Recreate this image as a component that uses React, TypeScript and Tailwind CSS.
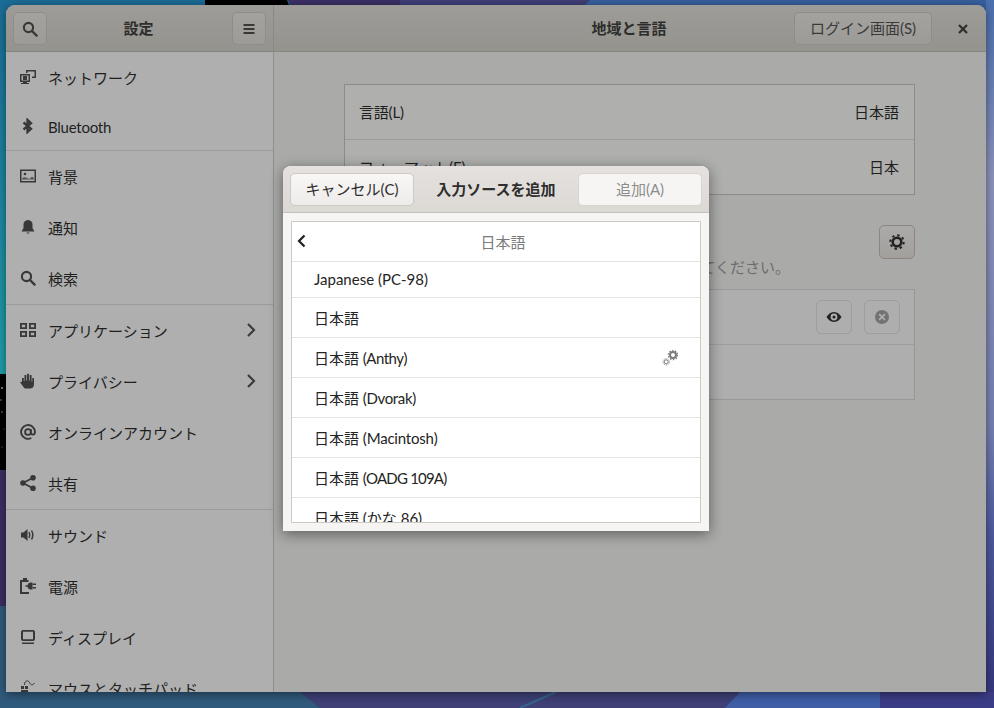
import type { ReactNode } from 'react'

const font = "font-['Lato','Noto_Sans_CJK_JP',sans-serif]"

function Icon({ children, className = 'text-[#383837]' }: { children: ReactNode; className?: string }) {
  return (
    <svg viewBox="0 0 16 16" className={`w-4 h-4 shrink-0 ${className}`} fill="currentColor" stroke="none">
      {children}
    </svg>
  )
}

const searchPaths = (
  <>
    <circle cx="6.500" cy="6.500" r="4.600" fill="none" stroke="currentColor" strokeWidth="2.100" />
    <path d="M10 10l4.600 4.600" stroke="currentColor" strokeWidth="2.400" strokeLinecap="round" />
  </>
)

const sidebarIcons: Record<string, ReactNode> = {
  network: (
    <>
      <path fillRule="evenodd" d="M0 5h10v8H7v1h2v1H1v-1h2v-1H0zm1.500 1.500v5h7v-5z" />
      <path d="M6 1h10v8h-4V7.500h2.500v-5h-7V4H6z" />
      <path d="M3 7h4v4H3z" />
    </>
  ),
  bluetooth: (
    <path
      fill="none"
      stroke="currentColor"
      strokeWidth="2.300"
      d="M3.500 4.500l7.500 6.300-3.500 3.300V1.900l3.500 3.300-7.500 6.300"
    />
  ),
  background: (
    <>
      <path fillRule="evenodd" d="M0 1.500h16v13H0zm1.500 1.500v10h13V3z" />
      <circle cx="5" cy="6" r="1.300" />
      <path d="M2 10.500c2-2 3.500-1.500 5-.5s3 1 4-.5 2-.5 3 1v1H2z" opacity=".75" />
    </>
  ),
  bell: (
    <>
      <path d="M8 1C5 1 3.500 3.200 3.500 5.500V9L1.500 12.500h13L12.500 9V5.500C12.500 3.200 11 1 8 1z" />
      <path d="M6.300 13.500h3.400L8 15z" />
    </>
  ),
  apps: (
    <path
      fillRule="evenodd"
      d="M0 1h7v6H0zm1.800 1.800v2.400h3.400V2.800zM9 1h7v6H9zm1.800 1.800v2.400h3.400V2.800zM0 9h7v6H0zm1.800 1.800v2.400h3.400v-2.400zM9 9h7v6H9zm1.800 1.800v2.400h3.400v-2.400z"
    />
  ),
  hand: (
    <path d="M2 5h1.800v3h.7V2h1.900v5.500h.7V.8h1.900v6.700h.7V2h1.900v6.500h.7V5H14v6c0 3-1.500 4.500-4 4.500H6.500c-1.500 0-2.500-.5-3-1.500L.5 10c-.5-1 .5-1.500 1.500-.8z" />
  ),
  at: (
    <>
      <circle cx="8" cy="8" r="2.900" fill="none" stroke="currentColor" strokeWidth="1.900" />
      <path
        d="M10.900 5.200V9c0 2.300 4 2.200 4-1A6.900 6.900 0 1 0 11.300 14"
        fill="none"
        stroke="currentColor"
        strokeWidth="1.900"
      />
    </>
  ),
  share: (
    <>
      <circle cx="3" cy="8" r="2.800" />
      <circle cx="13" cy="2.800" r="2.800" />
      <circle cx="13" cy="13.200" r="2.800" />
      <path d="M3 8l10-5.200M3 8l10 5.200" stroke="currentColor" strokeWidth="1.800" />
    </>
  ),
  sound: (
    <>
      <path d="M1 5.500h2.500L7.500 2v12l-4-3.500H1z" />
      <path d="M9 5c1 1.800 1 4.200 0 6M11.500 3.500c1.600 2.800 1.600 6.200 0 9" fill="none" stroke="currentColor" strokeWidth="1.500" />
    </>
  ),
  power: (
    <>
      <path d="M3 0h4v2h1.500v2H2v10h7v2H0V2h3z" />
      <path d="M7.500 8a3.500 3.500 0 0 1 3.500-3.500h1.500v7H11A3.500 3.500 0 0 1 7.500 8z" />
      <path d="M5.500 7.200h3v1.600h-3zM12.500 5.500H16v1.500h-3.500zM12.500 9H16v1.500h-3.500z" />
    </>
  ),
  display: (
    <>
      <path fillRule="evenodd" d="M3 1h10a2 2 0 0 1 2 2v7a2 2 0 0 1-2 2H3a2 2 0 0 1-2-2V3a2 2 0 0 1 2-2zm0 1.700v7.600h10V2.700z" />
      <path d="M2 13.500h12V15H2z" />
    </>
  ),
  mouse: (
    <>
      <path d="M1 6h3v3H1zM5 6h3v3H5zM1 10h7v3.500a2 2 0 0 1-2 2H3a2 2 0 0 1-2-2z" />
      <path d="M4.500 5c0-5 4-5 5-2.500s3 3.500 5 .5" fill="none" stroke="currentColor" strokeWidth="1" />
    </>
  ),
}

type Item = { label: string; icon: ReactNode; arrow?: boolean; latin?: boolean }

function SidebarRow({ item }: { item: Item }) {
  return (
    <div className={`flex items-center pl-[14px] pr-[14px] shrink-0 ${item.latin ? 'h-[47px]' : 'h-[51px]'}`}>
      <div className="w-[28px] -mt-[2px]">
        <Icon>{item.icon}</Icon>
      </div>
      <span className={`flex-1 text-[15px] text-[#1f1f1e] leading-none pt-[2px] ${item.latin ? 'tracking-[-0.25px]' : ''}`}>{item.label}</span>
      {item.arrow && (
        <svg viewBox="0 0 16 16" className="w-4 h-4 -mt-[2px] text-[#3b3b3a]" fill="none" stroke="currentColor" strokeWidth="2.200">
          <path d="M5 2l6 6-6 6" />
        </svg>
      )}
    </div>
  )
}

const Divider = () => <div className="h-px bg-[#9b9b99] shrink-0" />

function HeaderButton({ children, className = '' }: { children: ReactNode; className?: string }) {
  return (
    <div className={`h-[33px] flex items-center justify-center rounded-[5px] border border-[#8f8d88] bg-gradient-to-b from-[#a4a29e] to-[#9d9b97] ${className}`}>
      {children}
    </div>
  )
}

function ListRow({ children, h = 'h-[40px]', pt = 'pt-[2px]' }: { children: ReactNode; h?: string; pt?: string }) {
  return (
    <div className={`${h} ${pt} shrink-0 flex items-center justify-between pl-[22px] pr-[22px] border-b border-[#e4e3e1] text-[15px] text-[#242423]`}>
      {children}
    </div>
  )
}

function Gears() {
  return (
    <svg viewBox="0 0 16 16" className="w-4 h-4 text-[#7a7a7a] -mt-[2px]" fill="none" stroke="currentColor">
      <circle cx="11" cy="5" r="3" strokeWidth="2" />
      <circle cx="11" cy="5" r="4.600" strokeWidth="1.400" strokeDasharray="1.400 1.490" />
      <circle cx="4.200" cy="11.800" r="2" strokeWidth="1" />
      <circle cx="4.200" cy="11.800" r="3.200" strokeWidth=".9" strokeDasharray="1 1" />
    </svg>
  )
}

export default function App() {
  return (
    <div className={`relative w-[994px] h-[708px] overflow-hidden ${font}`}>
      {/* wallpaper */}
      <svg viewBox="0 0 994 708" className="absolute inset-0 w-full h-full">
        <defs>
          <linearGradient id="left" x1="0" y1="0" x2="0" y2="1">
            <stop offset="0" stopColor="#1a6c96" />
            <stop offset="1" stopColor="#1f9ea8" />
          </linearGradient>
          <linearGradient id="right" x1="0" y1="0" x2="0" y2="1">
            <stop offset="0" stopColor="#4a6fae" />
            <stop offset=".25" stopColor="#8d93bb" />
            <stop offset=".6" stopColor="#7681b2" />
            <stop offset=".75" stopColor="#4e5b9e" />
            <stop offset="1" stopColor="#34347a" />
          </linearGradient>
        </defs>
        <rect width="994" height="708" fill="#36507f" />
        <rect x="0" y="0" width="290" height="374" fill="url(#left)" />
        <polygon points="205,0 287,0 290,8 205,8" fill="#000" />
        <polygon points="288,0 530,0 530,10 292,10" fill="#3d2f66" />
        <polygon points="400,0 600,0 590,10 400,10" fill="#3f3f78" />
        <polygon points="590,0 994,0 994,10 580,10" fill="#37609f" />
        <rect x="0" y="374" width="6" height="96" fill="#000" />
        <circle cx="2" cy="388" r="1" fill="#999" />
        <circle cx="1" cy="400" r=".8" fill="#888" />
        <circle cx="2" cy="412" r=".8" fill="#888" />
        <circle cx="4" cy="429" r=".6" fill="#777" />
        <circle cx="2" cy="447" r=".6" fill="#777" />
        <rect x="0" y="470" width="6" height="136" fill="#3b2e62" />
        <rect x="0" y="606" width="6" height="102" fill="#325a7c" />
        <rect x="986" y="0" width="8" height="708" fill="url(#right)" />
        <polygon points="0,692 994,692 994,708 0,708" fill="#3a4a7c" />
        <polygon points="0,692 300,692 320,708 0,708" fill="#305a7c" />
        <polygon points="300,692 740,692 725,708 320,708" fill="#3e4076" />
        <polygon points="740,692 880,692 880,708 725,708" fill="#3f5ea6" />
        <polygon points="880,692 994,692 994,708 880,708" fill="#3b3c86" />
        <path d="M520 708 L556 692" stroke="#2f7ea0" strokeWidth="2" opacity=".6" />
      </svg>

      {/* settings window */}
      <div className="absolute left-[6px] top-[5px] w-[980px] h-[687px] rounded-t-[9px] overflow-hidden flex flex-col bg-[#aaaaa8] shadow-[0_2px_10px_rgba(0,0,0,0.45)]">
        <div className="h-[47px] shrink-0 flex border-b border-[#878580] bg-gradient-to-b from-[#9e9c98] to-[#95938e]">
          <div className="w-[268px] shrink-0 border-r border-[#8b8985] flex items-center justify-between px-[7px] pt-px">
            <HeaderButton className="w-[34px]">
              <Icon>{searchPaths}</Icon>
            </HeaderButton>
            <span className="text-[15px] font-bold text-[#2d2d2c] pr-[2px]">設定</span>
            <HeaderButton className="w-[34px]">
              <Icon>
                <path d="M2.500 3h11v2h-11zM2.500 7h11v2h-11zM2.500 11h11v2h-11z" />
              </Icon>
            </HeaderButton>
          </div>
          <div className="flex-1 flex items-center pt-px">
            <div className="w-[192px] shrink-0" />
            <span className="flex-1 text-center text-[15px] font-bold text-[#2d2d2c] pr-[2px]">地域と言語</span>
            <div className="w-[192px] shrink-0 flex items-center">
              <HeaderButton className="w-[138px] text-[15px] text-[#3a3a39]">ログイン画面(S)</HeaderButton>
              <svg viewBox="0 0 16 16" className="w-4 h-4 ml-[23px] text-[#2d2d2c]" fill="none" stroke="currentColor" strokeWidth="2.200">
                <path d="M4 4l8 8M12 4l-8 8" />
              </svg>
            </div>
          </div>
        </div>

        <div className="flex-1 flex min-h-0">
          <div className="w-[268px] shrink-0 bg-[#afafaf] border-r border-[#8f8f8d] flex flex-col overflow-hidden">
            <SidebarRow item={{ label: 'ネットワーク', icon: sidebarIcons.network }} />
            <SidebarRow item={{ label: 'Bluetooth', icon: sidebarIcons.bluetooth, latin: true }} />
            <Divider />
            <SidebarRow item={{ label: '背景', icon: sidebarIcons.background }} />
            <SidebarRow item={{ label: '通知', icon: sidebarIcons.bell }} />
            <SidebarRow item={{ label: '検索', icon: searchPaths }} />
            <Divider />
            <SidebarRow item={{ label: 'アプリケーション', icon: sidebarIcons.apps, arrow: true }} />
            <SidebarRow item={{ label: 'プライバシー', icon: sidebarIcons.hand, arrow: true }} />
            <SidebarRow item={{ label: 'オンラインアカウント', icon: sidebarIcons.at }} />
            <SidebarRow item={{ label: '共有', icon: sidebarIcons.share }} />
            <Divider />
            <SidebarRow item={{ label: 'サウンド', icon: sidebarIcons.sound }} />
            <SidebarRow item={{ label: '電源', icon: sidebarIcons.power }} />
            <SidebarRow item={{ label: 'ディスプレイ', icon: sidebarIcons.display }} />
            <SidebarRow item={{ label: 'マウスとタッチパッド', icon: sidebarIcons.mouse }} />
          </div>

          <div className="flex-1 bg-[#aaaaa8] pt-[32px] pl-[70px] pr-[71px] overflow-hidden">
            <div className="border border-[#8e8c87] bg-[#afafae] text-[15px] text-[#1f1f1e]">
              <div className="h-[55px] flex items-center justify-between pl-[14px] pr-[15px] border-b border-[#9c9b98]">
                <span className="tracking-[-0.2px]">言語(L)</span>
                <span>日本語</span>
              </div>
              <div className="h-[54px] flex items-center justify-between pl-[14px] pr-[15px]">
                <span>フォーマット(F)</span>
                <span>日本</span>
              </div>
            </div>

            <div className="flex justify-between items-start mt-[30px] h-[34px]">
              <span className="text-[15px] font-bold text-[#1f1f1e]">入力ソース</span>
              <div className="w-[36px] h-[34px] flex items-center justify-center rounded-[5px] border border-[#8e8580] bg-gradient-to-b from-[#acaaa8] to-[#a2a09d]">
                <Icon className="text-[#222222]">
                  <circle cx="8" cy="8" r="4.300" fill="none" stroke="currentColor" strokeWidth="2.600" />
                  <circle cx="8" cy="8" r="6.700" fill="none" stroke="currentColor" strokeWidth="2" strokeDasharray="2.400 2.860" />
                </Icon>
              </div>
            </div>
            <p className="text-[15px] text-[#6d6d6c] text-right -mt-[2px] pr-[125px] leading-[20px]">
              入力ソースを切り替えるには設定を確認してください。
            </p>

            <div className="mt-[12px] border border-[#989896] bg-[#aeaeae] text-[15px] text-[#1f1f1e]">
              <div className="h-[55px] flex items-center justify-between pl-[15px] pr-[14px] border-b border-[#9e9e9c]">
                <span>日本語</span>
                <div className="flex gap-[12px]">
                  <div className="w-[36px] h-[34px] rounded-[5px] border border-[#9e9e9c] flex items-center justify-center">
                    <Icon className="text-[#222222]">
                      <path fillRule="evenodd" d="M8 3c3.500 0 6 2.500 7.500 5-1.500 2.500-4 5-7.500 5S2 10.500.5 8C2 5.500 4.500 3 8 3zm0 1.600A3.400 3.400 0 1 0 8 11.400 3.400 3.400 0 0 0 8 4.600z" />
                      <circle cx="8" cy="8" r="1.500" />
                    </Icon>
                  </div>
                  <div className="w-[36px] h-[34px] rounded-[5px] border border-[#9e9e9c] flex items-center justify-center">
                    <Icon className="text-[#737372]">
                      <path fillRule="evenodd" d="M8 1a7 7 0 1 1 0 14A7 7 0 0 1 8 1zM5.700 4.500L4.500 5.700 6.800 8l-2.300 2.300 1.200 1.200L8 9.200l2.300 2.300 1.200-1.200L9.200 8l2.300-2.300-1.200-1.200L8 6.800z" />
                    </Icon>
                  </div>
                </div>
              </div>
              <div className="h-[54px]" />
            </div>
          </div>
        </div>
      </div>

      {/* add input source dialog */}
      <div className="absolute left-[283px] top-[166px] w-[426px] h-[365px] rounded-t-[8px] overflow-hidden bg-[#f6f5f3] shadow-[0_3px_14px_rgba(0,0,0,0.45)] flex flex-col">
        <div className="h-[47px] shrink-0 flex items-center justify-between px-[7px] border-b border-[#c4c0ba] bg-gradient-to-b from-[#e4e1de] to-[#dcd9d5]">
          <div className="w-[124px] h-[33px] rounded-[5px] border border-[#cdc9c4] bg-gradient-to-b from-[#f8f7f6] to-[#eeecea] flex items-center justify-center text-[15px] text-[#2e2e2d]">
            キャンセル(C)
          </div>
          <span className="text-[15px] font-bold text-[#2e2e2d]">入力ソースを追加</span>
          <div className="w-[124px] h-[33px] rounded-[5px] border border-[#d9d6d2] bg-[#f6f5f4] flex items-center justify-center text-[15px] text-[#8d8d8b]">
            追加(A)
          </div>
        </div>

        <div className="mx-[8px] mt-[8px] h-[302px] shrink-0 border border-[#cdc9c3] bg-white overflow-hidden">
          <div className="h-[40px] flex items-center border-b border-[#e4e3e1]">
            <svg viewBox="0 0 16 16" className="w-4 h-4 ml-[2px] -mt-[1px] text-[#1f1f1e]" fill="none" stroke="currentColor" strokeWidth="2.200">
              <path d="M10.500 2.500L5 8l5.500 5.500" />
            </svg>
            <span className="flex-1 text-center text-[15px] text-[#7b7b7a] pt-[2px] pr-[4px]">日本語</span>
          </div>
          <ListRow h="h-[36px]" pt="pt-0">Japanese (PC-98)</ListRow>
          <ListRow>日本語</ListRow>
          <ListRow>
            <span>日本語 <span className="tracking-[-0.5px]">(Anthy)</span></span>
            <Gears />
          </ListRow>
          <ListRow><span>日本語 <span className="tracking-[-0.35px]">(Dvorak)</span></span></ListRow>
          <ListRow><span>日本語 <span className="tracking-[-0.2px]">(Macintosh)</span></span></ListRow>
          <ListRow><span>日本語 <span className="tracking-[-0.8px]">(OADG 109A)</span></span></ListRow>
          <ListRow>日本語 (かな 86)</ListRow>
        </div>
      </div>
    </div>
  )
}
